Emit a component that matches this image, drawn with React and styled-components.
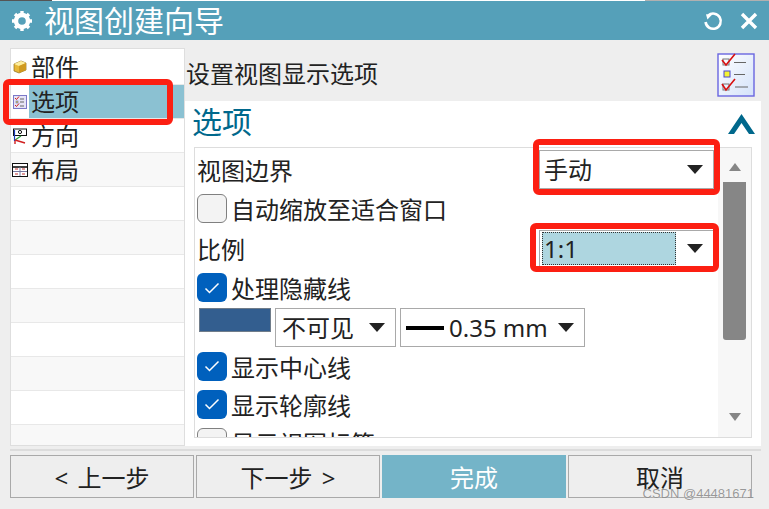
import React from 'react';
import styled, { createGlobalStyle } from 'styled-components';

const cjk = '"Noto Sans", "Noto Sans CJK SC", sans-serif';

const GlobalStyle = createGlobalStyle`
    html, body {
        margin: 0;
        padding: 0;
        background: #eeeeee;
    }
`

const Window = styled.div`
    position: relative;
    width: 769px;
    height: 509px;
    overflow: hidden;
    background: #eeeeee;
    font-family: ${cjk};
    font-size: 24px;
    color: #222;
`

const TopEdge = styled.div`
    height: 1px;
    background: linear-gradient(90deg, #555 0 52px, #fff 52px 645px, #b0b0b0 645px);
`

const TitleBar = styled.div`
    display: flex;
    align-items: center;
    height: 39px;
    padding: 0 11px;
    background: #55a0b9;
    color: #fff;
`

const TitleText = styled.div`
    flex: 1;
    margin-left: 11px;
    font-size: 30px;
    line-height: 39px;
`

const TitleAction = styled.svg`
    display: block;
    margin-left: ${props => props.$gap || 0}px;
`

const Body = styled.div`
    display: flex;
    height: 398px;
    padding: 8px 8px 0 10px;
`

const Sidebar = styled.div`
    box-sizing: border-box;
    width: 175px;
    height: 398px;
    border: 1px solid #dedede;
    background: #fff;
    overflow: hidden;
`

const NavRow = styled.div`
    display: flex;
    align-items: center;
    box-sizing: border-box;
    height: ${props => props.$first ? 35 : 34}px;
    padding-left: 1px;
    border-top: ${props => props.$first ? 'none' : '1px solid #e8e8e8'};
    background: ${props => props.$shaded ? '#f8f8f8' : '#fff'};
`

const NavIcon = styled.svg`
    flex: none;
    width: 16px;
    height: 16px;
    margin-right: 1px;
`

const NavLabel = styled.div`
    flex: 1;
    height: 33px;
    line-height: 33px;
    padding-left: 2px;
    background: ${props => props.$active ? '#8bc1d2' : 'transparent'};
`

const Main = styled.div`
    display: flex;
    flex-direction: column;
    width: 576px;
`

const PageHead = styled.div`
    flex: none;
    display: flex;
    align-items: center;
    justify-content: space-between;
    height: 53px;
    padding: 0 6px 0 1px;
    & > span {
        margin-top: -4px;
    }
`

const Panel = styled.div`
    flex: 1;
    min-height: 0;
    display: flex;
    flex-direction: column;
    padding: 0 9px 8px 9px;
    background: #fff;
`

const SectionHead = styled.div`
    flex: none;
    display: flex;
    align-items: center;
    justify-content: space-between;
    height: 46px;
    margin: 0 -3px 0 -2px;
    color: #00688c;
    font-size: 30px;
    line-height: 42px;
    & > span {
        margin-top: -4px;
    }
`

const OptionBox = styled.div`
    flex: 1;
    display: flex;
    min-height: 0;
    border: 1px solid #dddddd;
`

const OptionList = styled.div`
    flex: 1;
    min-width: 0;
    overflow: hidden;
    padding: 2px 4px 0 2px;
`

const Row = styled.div`
    display: flex;
    align-items: center;
    justify-content: space-between;
    height: ${props => props.$h}px;
`

const CheckRow = styled.div`
    display: flex;
    align-items: center;
    height: ${props => props.$h || 38}px;
`

const Box = styled.div`
    flex: none;
    display: flex;
    align-items: center;
    justify-content: center;
    box-sizing: border-box;
    width: 30px;
    height: 29px;
    margin-right: 4px;
    border-radius: 6px;
    border: ${props => props.$checked ? 'none' : '1px solid #808080'};
    background: ${props => props.$checked ? '#0060bd' : '#f3f3f3'};
`

const LineRow = styled.div`
    display: flex;
    align-items: flex-start;
    gap: 4px;
    height: 42px;
    padding: 3px 0 0 2px;
    box-sizing: border-box;
`

const Swatch = styled.div`
    box-sizing: border-box;
    width: 72px;
    height: 24px;
    background: #335e8f;
    border: 1px solid #6f7c8a;
`

const Select = styled.div`
    display: flex;
    align-items: center;
    box-sizing: border-box;
    flex: none;
    width: ${props => props.$w}px;
    height: ${props => props.$h || 39}px;
    padding: 1px 0 1px 2px;
    border: 1px solid #a9a9a9;
    background: #fff;
`

const SelectValue = styled.div`
    flex: 1;
    display: flex;
    align-items: center;
    gap: 5px;
    height: 100%;
    padding-left: ${props => props.$pad || 2}px;
    line-height: 33px;
    ${props => props.$focus && `
        box-sizing: border-box;
        background: #aed6e0;
        outline: 1px dotted #333;
        outline-offset: -1px;
        flex: none;
        width: 134px;
    `}
`

const Arrow = styled.span`
    flex: none;
    width: 0;
    height: 0;
    margin: 0 ${props => props.$right || 10}px 0 auto;
    border-left: 8px solid transparent;
    border-right: 8px solid transparent;
    border-top: 9px solid #222;
`

const LineSample = styled.span`
    display: block;
    width: 38px;
    height: 4px;
    background: #000;
`

const ScrollTrack = styled.div`
    flex: none;
    display: flex;
    flex-direction: column;
    align-items: center;
    width: 33px;
    background: #f7f7f7;
`

const ScrollThumb = styled.div`
    flex: none;
    width: 23px;
    height: 158px;
    margin-top: 11px;
    background: #868686;
    border-radius: 0 0 3px 3px;
`

const ScrollArrow = styled.span`
    flex: none;
    width: 0;
    height: 0;
    margin-top: ${props => props.$top}px;
    border-left: 6px solid transparent;
    border-right: 6px solid transparent;
    ${props => props.$down ? 'border-top: 8px solid #868686;' : 'border-bottom: 8px solid #868686;'}
`

const Footer = styled.div`
    display: flex;
    gap: 2px;
    margin: 3px 8px 0 10px;
    padding-top: 4px;
    border-top: 2px solid #dcdcdc;
`

const FooterButton = styled.div`
    box-sizing: border-box;
    width: 184px;
    height: 43px;
    border: 1px solid ${props => props.$primary ? '#74b4c8' : '#a9a9a9'};
    background: ${props => props.$primary ? '#74b4c8' : '#eeeeee'};
    color: ${props => props.$primary ? '#fff' : '#222'};
    text-align: center;
    line-height: 43px;
    word-spacing: 3px;
`

const Highlight = styled.div`
    position: absolute;
    left: ${props => props.$x}px;
    top: ${props => props.$y}px;
    width: ${props => props.$w}px;
    height: ${props => props.$h}px;
    box-sizing: border-box;
    border: 6px solid #fc1f12;
    border-radius: 6px;
    pointer-events: none;
`

const Watermark = styled.div`
    position: absolute;
    right: 15px;
    bottom: 8px;
    font-family: "Liberation Sans", sans-serif;
    font-size: 13px;
    line-height: 15px;
    color: rgba(120, 120, 120, 0.75);
    text-shadow: 0 0 1px rgba(255, 255, 255, 0.8);
`

const GearIcon = () => (
    <svg width="22" height="22" viewBox="0 0 22 22">
        <circle cx="11" cy="11" r="6" fill="none" stroke="#fff" strokeWidth="4.4" />
        <g stroke="#fff" strokeWidth="3.4">
            <path d="M11 1v4M11 17v4M1 11h4M17 11h4M4 4l3 3M15 15l3 3M18 4l-3 3M7 15l-3 3" />
        </g>
    </svg>
)

const RefreshIcon = () => (
    <TitleAction width="20" height="20" viewBox="0 0 20 20">
        <path d="M5.2 4.4A7.6 7.6 0 1 1 2.6 11" fill="none" stroke="#fff" strokeWidth="2.6" />
        <path d="M3 3.2l6 .6-4.6 4.6z" fill="#fff" />
    </TitleAction>
)

const CloseIcon = () => (
    <TitleAction $gap={17} width="18" height="18" viewBox="0 0 18 18">
        <path d="M2 2l14 14M16 2L2 16" stroke="#fff" strokeWidth="3.4" />
    </TitleAction>
)

const CheckMark = () => (
    <svg width="16" height="12" viewBox="0 0 16 12">
        <path d="M1.5 6.5l4 4 9-9" fill="none" stroke="#fff" strokeWidth="1.5" />
    </svg>
)

const PartIcon = () => (
    <NavIcon viewBox="0 0 16 16">
        <path d="M2 5l7-3 5 2v7l-7 3-5-2z" fill="#e8b838" stroke="#8c6a1a" strokeWidth=".7" />
        <path d="M2 5l5 2 7-3-5-2z" fill="#fdeea0" />
        <path d="M7 7v7l7-3V4z" fill="#d09a20" />
    </NavIcon>
)

const OptionsIcon = () => (
    <NavIcon viewBox="0 0 16 16">
        <rect x="1.5" y="1.5" width="13" height="13" fill="#e6e4f6" stroke="#7c78c8" />
        <path d="M3 4l1.5 1.5L7 2.5M3 11l1.5 1.5L7 9.5" fill="none" stroke="#d02020" />
        <rect x="4" y="7" width="2" height="2" fill="#e8e050" stroke="#5050b0" strokeWidth=".5" />
        <path d="M8 5h4M8 8h4M8 12h4" stroke="#666" />
    </NavIcon>
)

const DirectionIcon = () => (
    <NavIcon viewBox="0 0 16 16">
        <rect x="1.5" y="1" width="13" height="6.5" fill="#fff" stroke="#111" />
        <circle cx="8" cy="4" r="1.6" fill="none" stroke="#111" />
        <path d="M2.5 2v11" fill="none" stroke="#1a3cc0" strokeWidth="1.2" />
        <path d="M3 12l6-4" stroke="#22a030" strokeWidth="1.2" />
        <path d="M3 12l10 3" stroke="#d02020" strokeWidth="1.4" />
        <path d="M3 13v3" stroke="#d02020" strokeWidth="1.4" />
    </NavIcon>
)

const LayoutIcon = () => (
    <NavIcon viewBox="0 0 16 16">
        <rect x=".5" y="1.5" width="15" height="13" fill="#fff" stroke="#111" />
        <path d="M.5 5h15" stroke="#111" strokeWidth="1.6" />
        <path d="M8 5v9M1 9.5h14" stroke="#7878a0" />
        <path d="M3 7h3M10 7h3M3 12h3M10 12h3" stroke="#c03030" />
    </NavIcon>
)

const ChecklistIcon = () => (
    <svg width="38" height="44" viewBox="0 0 38 44">
        <defs>
            <linearGradient id="sheet" x1="0" y1="0" x2="1" y2="1">
                <stop offset="0" stopColor="#ffffff" />
                <stop offset="1" stopColor="#d4e2fa" />
            </linearGradient>
        </defs>
        <rect x="1" y="1" width="36" height="42" fill="url(#sheet)" stroke="#6a66e0" strokeWidth="1.4" />
        <rect x="6" y="6" width="6" height="6" fill="none" stroke="#777" />
        <rect x="7" y="18" width="6" height="6" fill="#f4f430" stroke="#4a46d0" />
        <rect x="6" y="31" width="6" height="6" fill="none" stroke="#777" />
        <path d="M5 7l4 5 9-11M5 31l4 6 9-11" fill="none" stroke="#d81010" strokeWidth="1.6" />
        <path d="M17 9.5h12M17 21.5h11M18 34h13" stroke="#666" strokeWidth="1" />
    </svg>
)

const CollapseIcon = () => (
    <svg width="27" height="20" viewBox="0 0 27 20">
        <polygon points="0,20 13.5,0 27,20 21,20 13.5,9 6,20" fill="#00688c" />
    </svg>
)

const navItems = [
    { label: '部件', icon: <PartIcon /> },
    { label: '选项', icon: <OptionsIcon />, active: true },
    { label: '方向', icon: <DirectionIcon /> },
    { label: '布局', icon: <LayoutIcon /> },
    {}, {}, {}, {}, {}, {}, {}, {}
];

function App() {
    return (
        <Window>
            <GlobalStyle />
            <TopEdge />
            <TitleBar>
                <GearIcon />
                <TitleText>视图创建向导</TitleText>
                <RefreshIcon />
                <CloseIcon />
            </TitleBar>
            <Body>
                <Sidebar>
                    {navItems.map((item, i) => (
                        <NavRow key={i} $first={i === 0} $shaded={i > 2 && i % 2 === 1}>
                            {item.icon}
                            <NavLabel $active={item.active}>{item.label}</NavLabel>
                        </NavRow>
                    ))}
                </Sidebar>
                <Main>
                    <PageHead>
                        <span>设置视图显示选项</span>
                        <ChecklistIcon />
                    </PageHead>
                    <Panel>
                        <SectionHead>
                            <span>选项</span>
                            <CollapseIcon />
                        </SectionHead>
                        <OptionBox>
                            <OptionList>
                                <Row $h={39}>
                                    <span>视图边界</span>
                                    <Select $w={175}>
                                        <SelectValue>手动</SelectValue>
                                        <Arrow />
                                    </Select>
                                </Row>
                                <CheckRow>
                                    <Box />
                                    <span>自动缩放至适合窗口</span>
                                </CheckRow>
                                <Row $h={43}>
                                    <span>比例</span>
                                    <Select $w={175} $h={37}>
                                        <SelectValue $focus>1:1</SelectValue>
                                        <Arrow />
                                    </Select>
                                </Row>
                                <CheckRow $h={35}>
                                    <Box $checked><CheckMark /></Box>
                                    <span>处理隐藏线</span>
                                </CheckRow>
                                <LineRow>
                                    <Swatch />
                                    <Select $w={121}>
                                        <SelectValue $pad={4}>不可见</SelectValue>
                                        <Arrow />
                                    </Select>
                                    <Select $w={185}>
                                        <SelectValue $pad={3}><LineSample />0.35 mm</SelectValue>
                                        <Arrow />
                                    </Select>
                                </LineRow>
                                <CheckRow>
                                    <Box $checked><CheckMark /></Box>
                                    <span>显示中心线</span>
                                </CheckRow>
                                <CheckRow>
                                    <Box $checked><CheckMark /></Box>
                                    <span>显示轮廓线</span>
                                </CheckRow>
                                <CheckRow>
                                    <Box />
                                    <span>显示视图标签</span>
                                </CheckRow>
                            </OptionList>
                            <ScrollTrack>
                                <ScrollArrow $top={15} />
                                <ScrollThumb />
                                <ScrollArrow $down $top={73} />
                            </ScrollTrack>
                        </OptionBox>
                    </Panel>
                </Main>
            </Body>
            <Footer>
                <FooterButton>&lt; 上一步</FooterButton>
                <FooterButton>下一步 &gt;</FooterButton>
                <FooterButton $primary>完成</FooterButton>
                <FooterButton>取消</FooterButton>
            </Footer>
            <Highlight $x={3} $y={79} $w={170} $h={46} />
            <Highlight $x={533} $y={139} $w={187} $h={56} />
            <Highlight $x={530} $y={223} $w={189} $h={49} />
            <Watermark>CSDN @44481671</Watermark>
        </Window>
    );
}

export default App;
